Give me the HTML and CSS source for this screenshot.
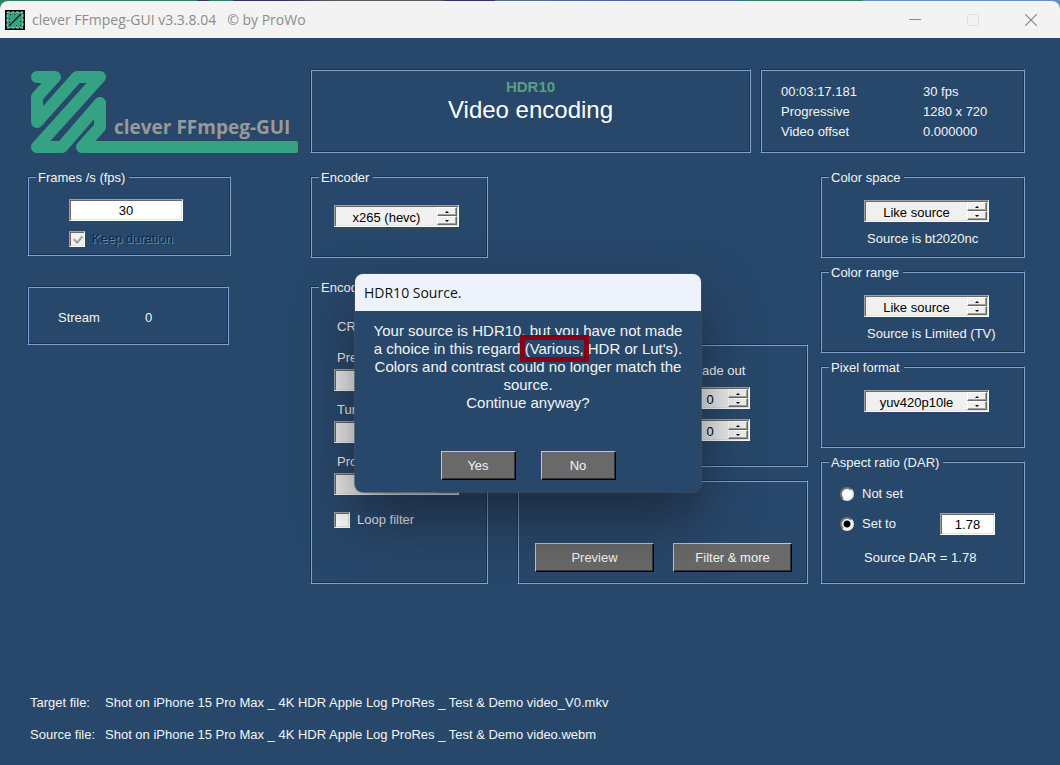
FILE: index.html
```
<!DOCTYPE html>
<html lang="en">

<head>
	<meta charset="utf-8">
	<title>clever FFmpeg-GUI</title>
	<link rel="stylesheet" href="styles.css">
</head>

<body>
	<div class="window">
		<header class="titlebar">
			<svg class="app-icon" viewBox="0 0 20 20" width="20" height="20">
				<rect width="20" height="20" fill="#000" />
				<rect x="2" y="2" width="16" height="16" fill="#35a283" />
				<path d="M2 2h16v16h-16z" fill="none" stroke="#b5cfc8" stroke-dasharray="3 1.5" />
				<path d="M4 16L16 4" stroke="#06251c" stroke-width="1.3" />
				<path d="M5 4h1v1h-1zM9 4h1v1h-1zM4 8h1v1h-1zM15 11h1v1h-1zM11 15h1v1h-1zM15 15h1v1h-1zM4 12h1v1h-1z" fill="#06251c" />
			</svg>
			<span class="app-title">clever FFmpeg-GUI v3.3.8.04 &nbsp; © by ProWo</span>
			<div class="controls">
				<button class="ctl" aria-label="Minimize"><svg width="12" height="12"><path d="M0 5.5H12" stroke="#888" /></svg></button>
				<button class="ctl" aria-label="Maximize" disabled><svg width="12" height="12"><rect x=".5" y=".5" width="11" height="11" rx="1" fill="none" stroke="#dedede" /></svg></button>
				<button class="ctl" aria-label="Close"><svg width="12" height="12"><path d="M0 0L12 12M12 0L0 12" stroke="#888" stroke-width="1.2" /></svg></button>
			</div>
		</header>

		<main>
			<div class="top">
				<svg class="logo" viewBox="27 69 283 84" width="283" height="84">
					<g fill="none" stroke="#35a283" stroke-width="12" stroke-linejoin="round" stroke-linecap="round">
						<path d="M37 77H55L37 97V122L77 77H100L37 147H62L100 103V127L82 147H292" />
					</g>
					<rect x="288" y="141" width="10" height="12" rx="2" fill="#35a283" />
					<text x="114" y="134" class="logo-text">clever FFmpeg-GUI</text>
				</svg>
				<section class="box heading">
					<div class="hdr">HDR10</div>
					<h1>Video encoding</h1>
				</section>
				<section class="box info">
					<span>00:03:17.181</span><span>30 fps</span>
					<span>Progressive</span><span>1280 x 720</span>
					<span>Video offset</span><span>0.000000</span>
				</section>
			</div>

			<div class="panels">
				<div class="col col-frames">
					<fieldset class="box">
						<legend>Frames /s (fps)</legend>
						<div class="frames">
							<input class="field" type="text" value="30" aria-label="Frames per second">
							<label class="check off"><input type="checkbox" checked disabled>Keep duration</label>
						</div>
					</fieldset>
					<section class="box stream"><span>Stream</span><span>0</span></section>
				</div>

				<div class="col col-encoder">
					<fieldset class="box encoder">
						<legend>Encoder</legend>
						<div class="encoder-body">
							<div class="spin"><input type="text" value="x265 (hevc)" aria-label="Encoder"><div class="arrows"><button class="up" aria-label="Up"></button><button class="down" aria-label="Down"></button></div></div>
						</div>
					</fieldset>
					<fieldset class="box options">
						<legend>Encoding</legend>
						<div class="options-body">
							<div class="crf">CRF</div>
							<div class="option">
								<label for="preset">Preset</label>
								<div class="spin"><input type="text" id="preset"><div class="arrows"><button class="up" aria-label="Up"></button><button class="down" aria-label="Down"></button></div></div>
							</div>
							<div class="option">
								<label for="tune">Tune</label>
								<div class="spin"><input type="text" id="tune"><div class="arrows"><button class="up" aria-label="Up"></button><button class="down" aria-label="Down"></button></div></div>
							</div>
							<div class="option">
								<label for="profile">Profile</label>
								<div class="spin"><input type="text" id="profile"><div class="arrows"><button class="up" aria-label="Up"></button><button class="down" aria-label="Down"></button></div></div>
							</div>
							<label class="check loop"><input type="checkbox">Loop filter</label>
						</div>
					</fieldset>
				</div>

				<div class="col col-fade">
					<section class="box fade">
						<div>Fade out</div>
						<div class="spin short"><input type="text" value="0" aria-label="Video fade out"><div class="arrows"><button class="up" aria-label="Up"></button><button class="down" aria-label="Down"></button></div></div>
						<div class="spin short"><input type="text" value="0" aria-label="Audio fade out"><div class="arrows"><button class="up" aria-label="Up"></button><button class="down" aria-label="Down"></button></div></div>
					</section>
					<section class="box actions">
						<button class="btn">Preview</button>
						<button class="btn">Filter &amp; more</button>
					</section>
				</div>

				<div class="col col-color">
					<fieldset class="box color">
						<legend>Color space</legend>
						<div class="color-body">
							<div class="spin"><input type="text" value="Like source" aria-label="Color space"><div class="arrows"><button class="up" aria-label="Up"></button><button class="down" aria-label="Down"></button></div></div>
							<div class="note">Source is bt2020nc</div>
						</div>
					</fieldset>
					<fieldset class="box color">
						<legend>Color range</legend>
						<div class="color-body">
							<div class="spin"><input type="text" value="Like source" aria-label="Color range"><div class="arrows"><button class="up" aria-label="Up"></button><button class="down" aria-label="Down"></button></div></div>
							<div class="note">Source is Limited (TV)</div>
						</div>
					</fieldset>
					<fieldset class="box color">
						<legend>Pixel format</legend>
						<div class="color-body">
							<div class="spin"><input type="text" value="yuv420p10le" aria-label="Pixel format"><div class="arrows"><button class="up" aria-label="Up"></button><button class="down" aria-label="Down"></button></div></div>
						</div>
					</fieldset>
					<fieldset class="box aspect">
						<legend>Aspect ratio (DAR)</legend>
						<div class="aspect-body">
							<label class="radio"><input type="radio" name="dar">Not set</label>
							<div class="dar-row">
								<label class="radio"><input type="radio" name="dar" checked>Set to</label>
								<input class="field dar" type="text" value="1.78" aria-label="Aspect ratio">
							</div>
							<div class="source-dar">Source DAR = 1.78</div>
						</div>
					</fieldset>
				</div>
			</div>

			<div class="files">
				<span>Target file:</span><span>Shot on iPhone 15 Pro Max _ 4K HDR Apple Log ProRes _ Test &amp; Demo video_V0.mkv</span>
				<span>Source file:</span><span>Shot on iPhone 15 Pro Max _ 4K HDR Apple Log ProRes _ Test &amp; Demo video.webm</span>
			</div>
		</main>
	</div>

	<div class="dialog" role="dialog" aria-labelledby="dlg-title">
		<div class="dialog-title" id="dlg-title">HDR10 Source.</div>
		<p class="message">Your source is HDR10, but you have not made<br>a choice in this regard <span class="mark">(Various,</span> HDR or Lut's).<br>Colors and contrast could no longer match the<br>source.<br>Continue anyway?</p>
		<div class="answers">
			<button class="btn">Yes</button>
			<button class="btn">No</button>
		</div>
	</div>
</body>

</html>
```
FILE: styles.css
```
* {
	box-sizing: border-box;
}

body {
	margin: 0;
	padding-top: 1px;
	min-height: 100vh;
	background: #28486b linear-gradient(90deg, #2f806a 0 197px, #35355f 197px 209px, #2f806a 209px 233px, #33355c 233px 290px, #5a6160 340px 440px, #352f66 446px 495px, #5a7080 495px, #4a679c 620px 740px, #2f806a 740px 863px, #6a8fc8 863px) 0 0 / 100% 12px no-repeat;
	color: #f4f4f4;
	font: 13px/16px "Liberation Sans", Arial, sans-serif;
}

button,
input {
	font: inherit;
	margin: 0;
}

.window {
	min-height: calc(100vh - 1px);
	background: #28486b;
	border-radius: 8px 8px 0 0;
	overflow: hidden;
}

/* title bar */
.titlebar {
	display: flex;
	align-items: center;
	height: 37px;
	padding-left: 5px;
	background: #f3f3f3;
	color: #8c8c8c;
}

.app-title {
	margin-left: 7px;
	font: 14px/20px "Open Sans", "Noto Sans", sans-serif;
}

.controls {
	display: flex;
	margin-left: auto;
	align-self: stretch;
}

.ctl {
	display: flex;
	align-items: center;
	justify-content: center;
	width: 58px;
	padding: 0;
	border: 0;
	background: none;
}

main {
	padding: 31px 35px 22px 27px;
}

/* etched frame */
.box {
	min-width: 0;
	margin: 0;
	padding: 0;
	border: 1px solid;
	border-color: #1b3350 #7ba3d2 #7ba3d2 #1b3350;
	box-shadow: inset 1px 1px #7ba3d2, inset -1px -1px #1b3350;
}

legend {
	margin-left: 8px;
	padding: 3px 4px 0 2px;
	line-height: 14px;
	background: #28486b;
}

.top {
	display: flex;
	height: 84px;
	margin-bottom: 15px;
}

.logo {
	flex: none;
}

.logo-text {
	font: bold 19px "Open Sans", "Noto Sans", sans-serif;
	fill: #999;
}

.heading {
	flex: 1;
	margin-right: 9px;
	padding-top: 8px;
	text-align: center;
}

.hdr {
	color: #5b9f80;
	font-size: 15px;
	font-weight: bold;
	line-height: 18px;
}

h1 {
	margin: 0;
	font-size: 24px;
	font-weight: normal;
	line-height: 28px;
	color: #fff;
}

.info {
	display: grid;
	grid-template-columns: 142px 1fr;
	align-content: start;
	width: 265px;
	padding: 12px 0 0 20px;
	line-height: 20px;
}

.panels {
	display: flex;
}

.col {
	display: flex;
	flex-direction: column;
}

.col-frames {
	width: 204px;
	margin-right: 79px;
	gap: 30px;
}

.col-encoder {
	width: 178px;
	margin-right: 29px;
	gap: 20px;
}

.col-fade {
	flex: 1;
	justify-content: flex-end;
	margin-right: 12px;
	gap: 13px;
}

.col-color {
	width: 205px;
	gap: 5px;
}

.frames {
	padding: 14px 0 8px 41px;
}

.field,
.spin {
	height: 22px;
	border: 1px solid;
	border-color: #a0a0a0 #fff #fff #a0a0a0;
	box-shadow: inset 1px 1px #696969, inset -1px -1px #e3e3e3;
	color: #000;
}

.field {
	display: block;
	width: 114px;
	padding: 1px;
	background: #fff;
	text-align: center;
}

.spin {
	display: flex;
	width: 125px;
	padding: 1px;
	background: #f0f0f0;
}

.spin input {
	flex: 1;
	min-width: 0;
	padding: 3px 0 0;
	border: 0;
	background: none;
	color: #000;
	text-align: center;
}

.spin.short {
	width: 60px;
}

.arrows {
	display: flex;
	flex-direction: column;
	width: 20px;
}

.arrows button {
	display: flex;
	flex: 1;
	align-items: center;
	justify-content: center;
	padding: 0;
	border: 1px solid;
	border-color: #fff #696969 #696969 #fff;
	box-shadow: inset -1px -1px #a0a0a0;
	background: #f0f0f0;
}

.arrows button::before {
	content: "";
	border: 2px solid transparent;
}

.arrows .up::before {
	border-top: 0;
	border-bottom-color: #000;
}

.arrows .down::before {
	border-bottom: 0;
	border-top-color: #000;
}

.check,
.radio {
	display: flex;
	align-items: center;
}

.check input {
	appearance: none;
	width: 16px;
	height: 16px;
	margin-right: 7px;
	border: 1px solid;
	border-color: #a0a0a0 #fff #fff #a0a0a0;
	box-shadow: inset 1px 1px #696969, inset -1px -1px #e3e3e3;
	background: #fff;
}

.check.off {
	margin-top: 10px;
	color: #14253b;
	text-shadow: 1px 1px #5d8dc2;
}

.check.off input {
	background: #f0f0f0;
}

.check.off input::before {
	content: "";
	display: block;
	width: 4px;
	height: 7px;
	margin: 2px 0 0 5px;
	border: solid #a0a0a0;
	border-width: 0 2px 2px 0;
	transform: rotate(40deg);
}

.stream {
	display: flex;
	align-items: center;
	width: 202px;
	height: 59px;
	padding: 4px 0 0 30px;
}

.stream span + span {
	margin-left: 45px;
}

.encoder {
	min-height: 90px;
}

.encoder-body {
	padding: 20px 0 0 23px;
}

.options {
	min-height: 306px;
}

.options-body {
	padding: 24px 0 0 23px;
}

.crf,
.option label {
	padding-left: 3px;
}

.crf {
	height: 20px;
}

.option {
	margin-top: 11px;
}

.option label {
	display: block;
	margin-bottom: 3px;
}

.loop {
	margin-top: 17px;
}

.fade {
	display: flex;
	flex-direction: column;
	align-items: flex-end;
	height: 123px;
	padding: 18px 57px 0 0;
}

.fade > div:first-child {
	width: 56px;
	margin-bottom: 8px;
}

.fade .spin + .spin {
	margin-top: 10px;
}

.actions {
	display: flex;
	align-items: flex-end;
	gap: 19px;
	height: 104px;
	padding: 0 15px 11px 17px;
}

.btn {
	height: 29px;
	padding: 0;
	border: 1px solid;
	border-color: #c4c4c4 #000 #000 #c4c4c4;
	box-shadow: inset -1px -1px #333;
	background: #696969;
	color: #f4f4f4;
}

.actions .btn {
	flex: 1;
}

.color {
	min-height: 90px;
}

.color-body {
	padding: 15px 0 0 43px;
}

.note {
	margin-top: 9px;
	padding-left: 3px;
}

.aspect {
	min-height: 131px;
}

.aspect-body {
	padding: 16px 0 0 19px;
}

.radio input {
	appearance: none;
	width: 14px;
	height: 14px;
	margin-right: 8px;
	border: 2px solid;
	border-color: #777 #e8e8e8 #e8e8e8 #777;
	border-radius: 50%;
	background: #fff;
}

.radio input:checked {
	background: radial-gradient(circle, #000 3px, #fff 4px);
}

.dar-row {
	display: flex;
	justify-content: space-between;
	margin: 11px 29px 15px 0;
}

.field.dar {
	width: 55px;
}

.source-dar {
	padding-left: 24px;
}

.files {
	display: grid;
	grid-template-columns: 75px 1fr;
	row-gap: 16px;
	margin-top: 111px;
	padding-left: 3px;
}

/* message window over the main one */
.dialog {
	position: absolute;
	top: 274px;
	left: 355px;
	width: 346px;
	height: 218px;
	border-radius: 8px;
	overflow: hidden;
	background: #28486b;
	box-shadow: 0 0 0 1px rgba(70, 80, 95, 0.7), 0 28px 56px rgba(20, 20, 30, 0.55);
}

.dialog-title {
	height: 37px;
	padding-left: 9px;
	background: #eef3fb;
	color: #111;
	font: 14px/37px "Open Sans", "Noto Sans", sans-serif;
}

.message {
	margin: 11px 0 39px;
	font-size: 15px;
	line-height: 18px;
	text-align: center;
	white-space: nowrap;
}

.mark {
	outline: 5px solid #850016;
}

.answers {
	display: flex;
	justify-content: center;
	gap: 25px;
}

.answers .btn {
	width: 75px;
}
```
